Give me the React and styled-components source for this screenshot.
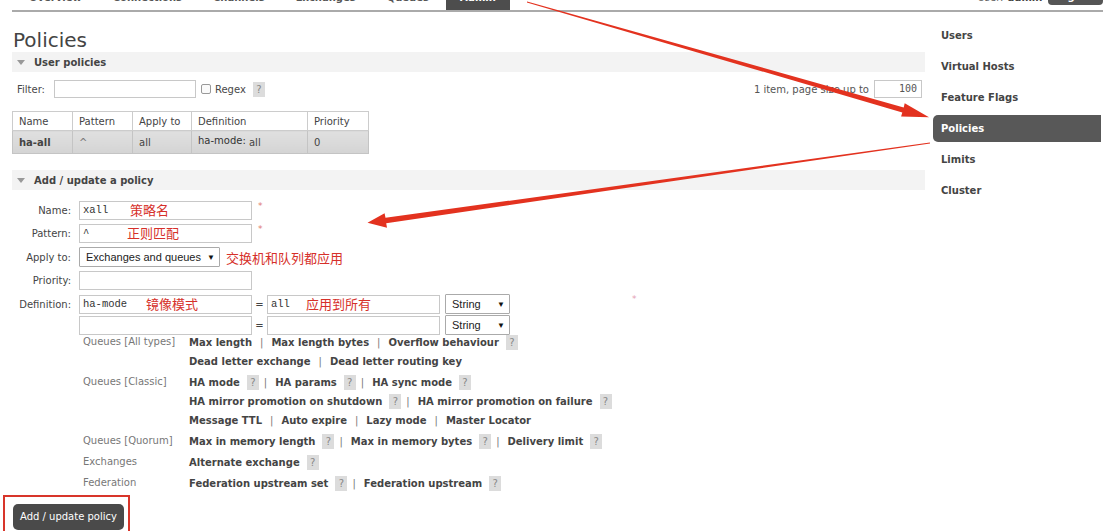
import React from "react";
import styled, { createGlobalStyle } from "styled-components";

const TABS = ["Overview", "Connections", "Channels", "Exchanges", "Queues", "Admin"];
const SIDE = ["Users", "Virtual Hosts", "Feature Flags", "Policies", "Limits", "Cluster"];

const GROUPS = [
  {
    label: "Queues [All types]",
    lines: [
      [{ t: "Max length" }, { t: "Max length bytes" }, { t: "Overflow behaviour", help: true }],
      [{ t: "Dead letter exchange" }, { t: "Dead letter routing key" }],
    ],
  },
  {
    label: "Queues [Classic]",
    lines: [
      [{ t: "HA mode", help: true }, { t: "HA params", help: true }, { t: "HA sync mode", help: true }],
      [
        { t: "HA mirror promotion on shutdown", help: true },
        { t: "HA mirror promotion on failure", help: true },
      ],
      [{ t: "Message TTL" }, { t: "Auto expire" }, { t: "Lazy mode" }, { t: "Master Locator" }],
    ],
  },
  {
    label: "Queues [Quorum]",
    lines: [
      [
        { t: "Max in memory length", help: true },
        { t: "Max in memory bytes", help: true },
        { t: "Delivery limit", help: true },
      ],
    ],
  },
  { label: "Exchanges", lines: [[{ t: "Alternate exchange", help: true }]] },
  {
    label: "Federation",
    lines: [[{ t: "Federation upstream set", help: true }, { t: "Federation upstream", help: true }]],
  },
];

function App() {
  return (
    <Page>
      <GlobalStyle />
      <Header>
        <Tabs>
          {TABS.map((t) => (
            <Tab key={t} active={t === "Admin"}>
              {t}
            </Tab>
          ))}
        </Tabs>
        <UserBox>
          User: <b>admin</b>
          <LogOut>Log out</LogOut>
        </UserBox>
      </Header>

      <Layout>
        <Main>
          <Title>Policies</Title>
          <Band>
            <Caret />
            User policies
          </Band>
          <FilterRow>
            <span>Filter:</span>
            <FilterInput />
            <Check />
            <span>Regex</span>
            <Help>?</Help>
            <Paging>
              1 item, page size up to
              <PageInput>100</PageInput>
            </Paging>
          </FilterRow>

          <Table>
            <thead>
              <tr>
                <Th w={60}>Name</Th>
                <Th w={60}>Pattern</Th>
                <Th w={59}>Apply to</Th>
                <Th w={116}>Definition</Th>
                <Th w={61}>Priority</Th>
              </tr>
            </thead>
            <tbody>
              <tr>
                <Td>
                  <b>ha-all</b>
                </Td>
                <Td muted>^</Td>
                <Td>all</Td>
                <Td>
                  <DefKey>ha-mode:</DefKey> all
                </Td>
                <Td>0</Td>
              </tr>
            </tbody>
          </Table>

          <Band gap={16}>
            <Caret />
            Add / update a policy
          </Band>

          <Form>
            <Row>
              <Label>Name:</Label>
              <Field>
                <Input w={173}>xall</Input>
                <Note left={51}>策略名</Note>
              </Field>
              <Star>*</Star>
            </Row>
            <Row>
              <Label>Pattern:</Label>
              <Field>
                <Input w={173}>^</Input>
                <Note left={48}>正则匹配</Note>
              </Field>
              <Star>*</Star>
            </Row>
            <Row>
              <Label>Apply to:</Label>
              <Select w={141}>
                Exchanges and queues <Arrow>▼</Arrow>
              </Select>
              <SideNote>交换机和队列都应用</SideNote>
            </Row>
            <Row>
              <Label>Priority:</Label>
              <Input w={173} />
            </Row>
            <Row>
              <Label>Definition:</Label>
              <Field>
                <Input w={173}>ha-mode</Input>
                <Note left={67}>镜像模式</Note>
              </Field>
              <Eq>=</Eq>
              <Field>
                <Input w={173}>all</Input>
                <Note left={39}>应用到所有</Note>
              </Field>
              <Select w={65} small>
                String <Arrow>▼</Arrow>
              </Select>
              <PinkStar>*</PinkStar>
            </Row>
            <Row tight>
              <Label />
              <Input w={173} />
              <Eq>=</Eq>
              <Input w={173} />
              <Select w={65} small>
                String <Arrow>▼</Arrow>
              </Select>
            </Row>
          </Form>

          <Links>
            {GROUPS.map((g) => (
              <Group key={g.label}>
                <GroupLabel>{g.label}</GroupLabel>
                <div>
                  {g.lines.map((line, i) => (
                    <Line key={i}>
                      {line.map((item, j) => (
                        <React.Fragment key={item.t}>
                          {j > 0 && <Sep>|</Sep>}
                          <LinkText>{item.t}</LinkText>
                          {item.help && <Help>?</Help>}
                        </React.Fragment>
                      ))}
                    </Line>
                  ))}
                </div>
              </Group>
            ))}
          </Links>

          <Frame>
            <Button>Add / update policy</Button>
          </Frame>
        </Main>

        <Sidebar>
          {SIDE.map((s) => (
            <SideItem key={s} active={s === "Policies"}>
              {s}
            </SideItem>
          ))}
        </Sidebar>
      </Layout>

      <Arrows viewBox="0 0 1107 531">
        <polygon points="527.1,1.5 903.7,107.4 904.7,103.2 929,117.3 901.1,116.6 902.3,112.4 526.9,2.5" />
        <polygon points="929.9,142.6 385.5,217.8 384.6,213.2 367.5,222.8 387,227.8 386.2,223.2 930.1,143.4" />
      </Arrows>
    </Page>
  );
}

export default App;

const GlobalStyle = createGlobalStyle`
  html, body {
    margin: 0;
    padding: 0;
    background: #fff;
  }
  body {
    font-family: "DejaVu Sans", Verdana, sans-serif;
    font-size: 10px;
    color: #484848;
  }
  * {
    box-sizing: border-box;
  }
`;

const Page = styled.div`
  position: relative;
  width: 1107px;
  height: 531px;
  overflow: hidden;
`;

const Header = styled.div`
  display: flex;
  align-items: flex-end;
  height: 26px;
  margin: -14px 4px 0 12px;
  border-bottom: 2px solid #aaa;
`;

const Tabs = styled.div`
  display: flex;
  padding-left: 3px;
`;

const Tab = styled.div`
  height: 24px;
  line-height: 24px;
  padding: 0 14px;
  margin-right: 3px;
  font-weight: bold;
  font-size: 10px;
  color: ${({ active }) => (active ? "#fff" : "#555")};
  background: ${({ active }) => (active ? "#4d4d4d" : "transparent")};
`;

const UserBox = styled.div`
  display: flex;
  align-items: center;
  align-self: flex-start;
  height: 22px;
  margin-left: auto;
  color: #666;
  b {
    margin-left: 4px;
    color: #444;
  }
`;

const LogOut = styled.span`
  margin-left: 6px;
  height: 16px;
  line-height: 16px;
  padding: 0 6px;
  border-radius: 4px;
  background: #555;
  color: #fff;
  font-weight: bold;
`;

const Layout = styled.div`
  display: flex;
  align-items: flex-start;
  padding-left: 12px;
`;

const Main = styled.main`
  width: 913px;
`;

const Title = styled.h1`
  margin: 16px 0 0 1px;
  font-weight: normal;
  font-size: 20px;
  line-height: 24px;
  color: #444;
`;

const Band = styled.div`
  display: flex;
  align-items: center;
  height: 20px;
  margin-top: ${({ gap }) => gap || 0}px;
  padding-left: 5px;
  background: #f3f3f3;
  font-weight: bold;
  color: #444;
`;

const Caret = styled.span`
  width: 0;
  height: 0;
  margin-right: 9px;
  border-left: 4px solid transparent;
  border-right: 4px solid transparent;
  border-top: 5px solid #999;
`;

const FilterRow = styled.div`
  display: flex;
  align-items: center;
  height: 20px;
  margin-top: 7px;
  padding-left: 5px;
`;

const FilterInput = styled.div`
  width: 142px;
  height: 18px;
  margin-left: 9px;
  border: 1px solid #c8c8c8;
  background: #fff;
`;

const Check = styled.span`
  width: 10px;
  height: 10px;
  margin: 0 4px 0 5px;
  border: 1px solid #999;
  border-radius: 2px;
  background: #fafafa;
`;

const Help = styled.span`
  display: inline-block;
  width: 12px;
  height: 15px;
  line-height: 15px;
  margin: 0 -3px 0 7px;
  text-align: center;
  background: #dcdcdc;
  color: #888;
  font-weight: normal;
`;

const Paging = styled.div`
  display: flex;
  align-items: center;
  margin-left: auto;
  margin-right: 3px;
  color: #555;
`;

const PageInput = styled.div`
  width: 48px;
  height: 18px;
  line-height: 16px;
  margin-left: 5px;
  padding-right: 4px;
  text-align: right;
  border: 1px solid #c8c8c8;
  font-family: "DejaVu Sans Mono", monospace;
  font-size: 10px;
  color: #555;
`;

const Table = styled.table`
  margin-top: 12px;
  border-collapse: collapse;
  border: 1px solid #ccc;
`;

const Th = styled.th`
  width: ${({ w }) => w}px;
  height: 19px;
  padding: 0 6px;
  text-align: left;
  font-weight: normal;
  border: 1px solid #ccc;
  background: #fff;
  color: #444;
`;

const Td = styled.td`
  height: 23px;
  padding: 0 6px;
  border: 1px solid #c4c4c4;
  border-top: none;
  background: linear-gradient(#e0e0e0, #d4d4d4);
  color: ${({ muted }) => (muted ? "#777" : "#444")};
`;

const DefKey = styled.span`
  position: relative;
  top: -2px;
  color: #333;
`;

const Form = styled.div`
  display: flex;
  flex-direction: column;
  gap: 4px;
  margin-top: 11px;
`;

const Row = styled.div`
  display: flex;
  align-items: center;
  margin-top: ${({ tight }) => (tight ? "-3px" : "0")};
`;

const Label = styled.div`
  width: 59px;
  margin-right: 8px;
  text-align: right;
  color: #444;
`;

const Field = styled.div`
  position: relative;
`;

const Input = styled.div`
  width: ${({ w }) => w}px;
  height: 19px;
  line-height: 17px;
  padding-left: 3px;
  border: 1px solid #c8c8c8;
  background: #fff;
  font-family: "Liberation Mono", "DejaVu Sans Mono", monospace;
  font-size: 10.5px;
  color: #333;
`;

const Note = styled.span`
  position: absolute;
  top: -1px;
  left: ${({ left }) => left}px;
  font-family: "Noto Sans CJK SC", sans-serif;
  font-size: 13px;
  line-height: 19px;
  color: #d6302a;
  white-space: nowrap;
`;

const SideNote = styled.span`
  margin-left: 6px;
  font-family: "Noto Sans CJK SC", sans-serif;
  font-size: 13px;
  color: #d6302a;
`;

const Star = styled.span`
  margin-left: 6px;
  color: #e07a70;
  align-self: flex-start;
  font-size: 9px;
`;

const PinkStar = styled.span`
  margin-left: 122px;
  align-self: flex-start;
  color: #e4a0b4;
  font-size: 9px;
`;

const Select = styled.div`
  display: flex;
  align-items: center;
  width: ${({ w }) => w}px;
  height: 20px;
  margin-left: ${({ small }) => (small ? "5px" : "0")};
  padding: 0 4px 0 6px;
  border: 1px solid #aaa;
  border-radius: 1px;
  background: #fff;
  font-family: "Liberation Sans", Arial, sans-serif;
  font-size: 11px;
  color: #222;
`;

const Arrow = styled.span`
  margin-left: auto;
  font-size: 8px;
  color: #111;
`;

const Eq = styled.span`
  width: 15px;
  text-align: center;
  color: #444;
`;

const Links = styled.div`
  display: flex;
  flex-direction: column;
  gap: 2px;
  margin-top: -2px;
  padding-left: 71px;
`;

const Group = styled.div`
  display: grid;
  grid-template-columns: 106px 1fr;
`;

const GroupLabel = styled.div`
  line-height: 19px;
  color: #777;
  position: relative;
  top: -1px;
`;

const Line = styled.div`
  display: flex;
  align-items: center;
  height: 19px;
  font-weight: bold;
  color: #444;
`;

const LinkText = styled.span`
  white-space: nowrap;
`;

const Sep = styled.span`
  margin: 0 8px;
  font-weight: normal;
  color: #777;
`;

const Frame = styled.div`
  width: 127px;
  height: 40px;
  margin: 2px 0 0 -9px;
  padding: 7px 0 0 8px;
  border: 2px solid #d8352a;
`;

const Button = styled.div`
  display: inline-block;
  height: 26px;
  line-height: 26px;
  padding: 0 7px;
  border-radius: 5px;
  background: #4a4a4a;
  color: #fff;
  font-size: 10px;
`;

const Sidebar = styled.nav`
  width: 168px;
  margin: 10px 0 0 8px;
`;

const SideItem = styled.div`
  height: 27px;
  line-height: 27px;
  margin-bottom: 4px;
  padding-left: 8px;
  border-radius: 5px 0 0 5px;
  font-weight: bold;
  color: ${({ active }) => (active ? "#fff" : "#444")};
  background: ${({ active }) => (active ? "#585858" : "transparent")};
`;

const Arrows = styled.svg`
  position: absolute;
  top: 0;
  left: 0;
  width: 1107px;
  height: 531px;
  pointer-events: none;
  fill: #e3321f;
`;
